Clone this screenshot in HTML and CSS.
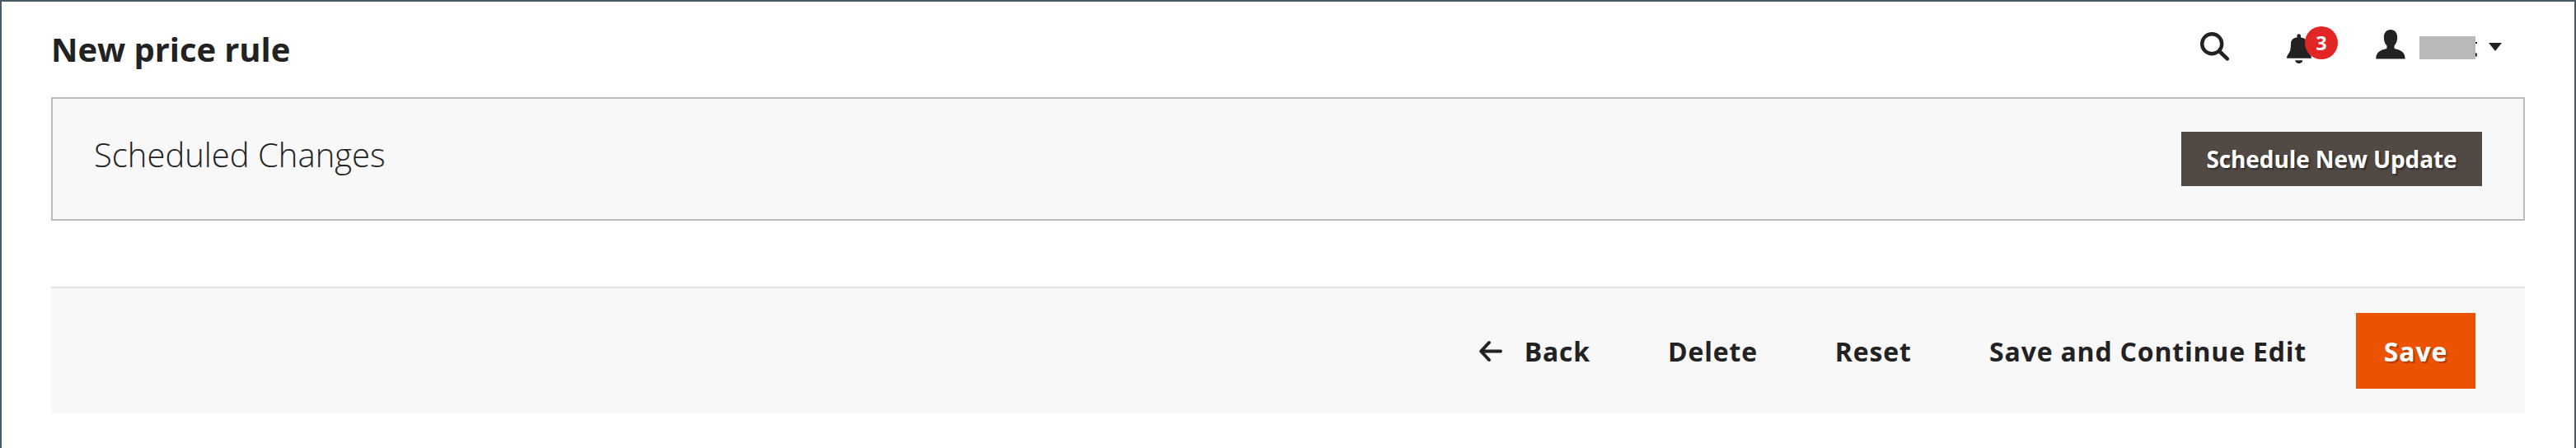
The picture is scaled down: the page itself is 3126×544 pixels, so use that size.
FILE: index.html
```html
<!DOCTYPE html>
<html lang="en">
<head>
<meta charset="utf-8">
<title>New price rule</title>
<link rel="stylesheet" href="styles.css">
</head>
<body>
<div class="page">
  <header class="header">
    <h1 class="title">New price rule</h1>
    <div class="tools">
      <svg class="icon-search" width="36" height="36" viewBox="0 0 36 36"><circle cx="14.2" cy="14.2" r="12" fill="none" stroke="#222" stroke-width="4.4"/><path d="M23.5 23.5L32.8 32.4" stroke="#222" stroke-width="4.6" stroke-linecap="round"/></svg>
      <div class="alerts">
        <svg width="30" height="37" viewBox="0 0 30 37"><path d="M12.5 4Q12.500 2.300 14.700 2.300T17 4V6.500C22 7 24.500 9.500 24.800 14C25 22 26 24 28.500 27Q29.800 28.500 30 31.800H0Q.2 28.500 1.500 27C4 24 4.800 22 5 14C5.200 9.500 7.500 7 12.500 6.500ZM10 34.200H19.500Q18.500 38 14.800 38T10 34.200Z" fill="#222"/></svg>
        <span class="badge">3</span>
      </div>
      <svg class="icon-user" width="36" height="36" viewBox="0 0 36 36"><path d="M18 0C23 0 26.200 3.800 26.200 9.500C26.200 14 24.500 17.800 22.500 19.500V22.500C24 24.500 35.700 23.500 35.700 35.500H.3C.3 23.500 12 24.500 13.500 22.500V19.500C11.500 17.800 9.800 14 9.800 9.500C9.800 3.800 13 0 18 0Z" fill="#222"/></svg>
      <span class="account"></span>
      <svg class="tail" width="2" height="20" viewBox="0 0 2 20"><path d="M0 1H2V3H0ZM0 14Q2 14 2 16.500T0 19Z" fill="#222"/></svg>
      <svg class="caret" width="16" height="10" viewBox="0 0 16 10"><path d="M0 0H16L8 10Z" fill="#222"/></svg>
    </div>
  </header>
  <section class="scheduled">
    <h2 class="subtitle">Scheduled Changes</h2>
    <button class="btn btn-schedule">Schedule New Update</button>
  </section>
  <div class="actions">
    <button class="btn btn-back"><svg width="28" height="25" viewBox="0 0 28 25"><path d="M12 2L2.200 12.500L12 23M2.500 12.500H26" fill="none" stroke="#222" stroke-width="4" stroke-linecap="round" stroke-linejoin="round"/></svg>Back</button>
    <button class="btn btn-delete">Delete</button>
    <button class="btn btn-reset">Reset</button>
    <button class="btn btn-continue">Save and Continue Edit</button>
    <button class="btn btn-save">Save</button>
  </div>
</div>
</body>
</html>
```
FILE: styles.css
```css
* { box-sizing: border-box; }
body { margin: 0; background: #fff; color: #222; font-family: "Open Sans", sans-serif; }
svg { display: block; flex: none; overflow: visible; }
.page { height: 544px; padding: 0 60px; border: 2px solid #455a64; border-bottom: 0; overflow: hidden; }
.header { height: 116px; display: flex; justify-content: space-between; align-items: flex-start; }
.title { margin: 31px 0 0; font-size: 40px; line-height: 54px; font-weight: 700; letter-spacing: -.08px; }
.tools { display: flex; align-items: flex-start; padding-right: 28px; }
.icon-search { margin-top: 37px; }
.alerts { position: relative; margin: 37px 0 0 69px; }
.badge { position: absolute; left: 22px; top: -7px; width: 40px; height: 40px; border-radius: 50%; background: #e22626; color: #fff; font-size: 23.5px; line-height: 40px; font-weight: 700; text-align: center; }
.icon-user { margin: 34px 0 0 78px; }
.account { width: 68px; height: 28px; margin: 42px 0 0 17px; background: #b9b9b9; }
.tail { margin-top: 48px; }
.caret { margin: 50px 0 0 14px; }
.scheduled { height: 150px; border: 2px solid #bbb; background: #f8f8f8; display: flex; justify-content: space-between; align-items: flex-start; padding: 40px 50px 0 50px; }
.subtitle { margin: 1px 0 0; font-size: 40px; line-height: 54px; font-weight: 300; }
.btn { border: 0; border-radius: 0; margin: 0; padding: 0; background: none; color: #222; font-family: inherit; font-weight: 700; white-space: nowrap; }
.btn-schedule { width: 365px; height: 66px; background: #514943; color: #fff; font-size: 28px; letter-spacing: -.1px; text-shadow: 2px 2px 2px rgba(0,0,0,.4); }
.actions { height: 154px; margin-top: 80px; border-top: 2px solid #e3e3e3; background: #f8f8f8; display: flex; justify-content: flex-end; align-items: flex-start; padding: 30px 60px 0 0; }
.actions .btn { height: 92px; font-size: 32px; letter-spacing: .8px; }
.btn-back { display: flex; align-items: center; gap: 27px; }
.actions .btn-delete { margin-left: 94px; }
.actions .btn-reset { margin-left: 94px; }
.actions .btn-continue { margin-left: 94.5px; }
.actions .btn-save { margin-left: 60px; width: 145px; background: #eb5202; color: #fff; text-shadow: 2px 2px 0 rgba(0,0,0,.25); }
```
